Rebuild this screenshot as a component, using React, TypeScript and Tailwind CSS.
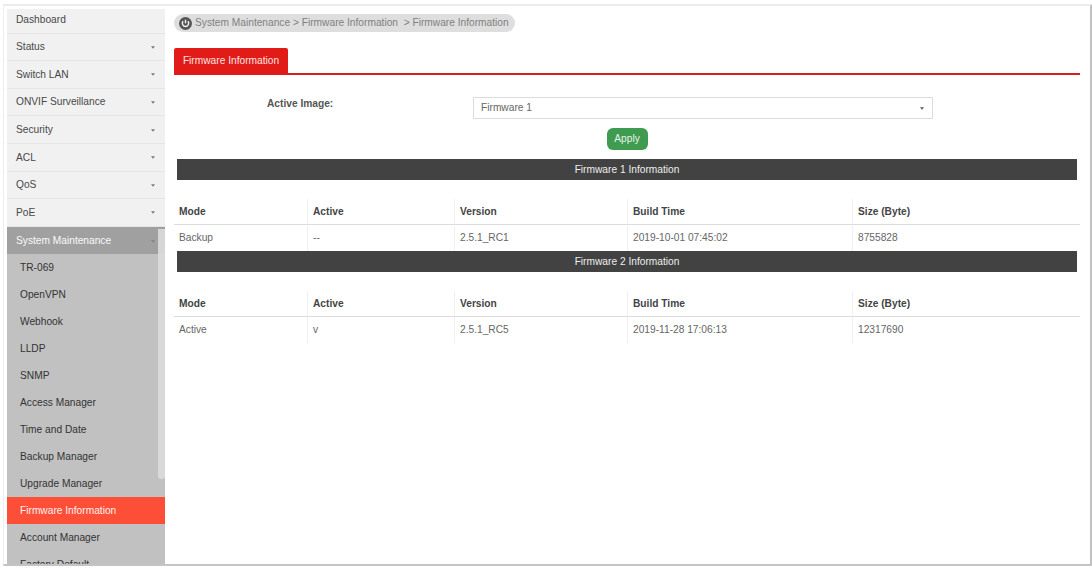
import React from "react";

const menu = ["Dashboard", "Status", "Switch LAN", "ONVIF Surveillance", "Security", "ACL", "QoS", "PoE"];

const submenu = [
  "TR-069",
  "OpenVPN",
  "Webhook",
  "LLDP",
  "SNMP",
  "Access Manager",
  "Time and Date",
  "Backup Manager",
  "Upgrade Manager",
  "Firmware Information",
  "Account Manager",
  "Factory Default",
];

const columns = ["Mode", "Active", "Version", "Build Time", "Size (Byte)"];

function Caret({ className = "" }: { className?: string }) {
  return (
    <svg className={className} width="4" height="3" viewBox="0 0 5 3" fill="currentColor">
      <path d="M0 0h5L2.5 3z" />
    </svg>
  );
}

function Sidebar() {
  return (
    <nav className="relative h-[555px] w-[158px] shrink-0 overflow-hidden bg-[#f1f1f1]">
      <ul className="-mt-[3px]">
        {menu.map((item, i) => (
          <li
            key={item}
            className="flex h-[27.6px] items-center border-b border-[#e5e5e5] pl-[9px] pr-[10px] pt-px text-[#484848]"
          >
            <span className="grow">{item}</span>
            {i > 0 && <Caret className="text-[#777]" />}
          </li>
        ))}
      </ul>
      <div className="flex h-[27px] items-center bg-[#a0a0a0] pl-[9px] pr-[10px] pt-[2px] text-[#fafafa]">
        <span className="grow">System Maintenance</span>
        <Caret className="text-[#808080]" />
      </div>
      <ul className="bg-[#c1c1c1]">
        {submenu.map((item) => (
          <li
            key={item}
            className={
              item === "Firmware Information"
                ? "flex h-[27px] items-center bg-[#fd4f38] pl-[13px] pt-[2px] text-[#fff0ed]"
                : "flex h-[27px] items-center pl-[13px] pt-px text-[#333]"
            }
          >
            {item}
          </li>
        ))}
      </ul>
      <div className="absolute right-0 top-[220px] h-[250px] w-[7px] rounded-b-[3px] bg-[#dcdcdc]/90" />
    </nav>
  );
}

function FirmwareTable({ title, values }: { title: string; values: string[] }) {
  return (
    <section className="h-[92px]">
      <h2 className="mx-[3px] flex h-[21px] items-center justify-center bg-[#424242] pt-[2px] text-[#eee]">{title}</h2>
      <div className="mt-[19px] grid grid-cols-[133px_147px_173px_225px_1fr]">
        {columns.map((c, i) => (
          <div
            key={c}
            className={
              "flex h-[26px] items-center border-b border-[#dcdcdc] pl-[5px] pt-[2px] font-bold text-[#444] " +
              (i > 0 ? "border-l border-l-[#f0f0f0]" : "")
            }
          >
            {c}
          </div>
        ))}
        {values.map((v, i) => (
          <div
            key={columns[i]}
            className={
              "flex h-[26px] items-center pl-[5px] pt-px text-[#666] " + (i > 0 ? "border-l border-[#f0f0f0]" : "")
            }
          >
            {v}
          </div>
        ))}
      </div>
    </section>
  );
}

export default function App() {
  return (
    <div className="h-[570px] w-[1092px] overflow-hidden bg-white pl-[3px] pt-[4px] font-['Liberation_Sans',Arial,sans-serif] text-[10.2px] leading-none">
      <div className="flex h-[562px] w-[1089px] overflow-hidden border-b-2 border-l border-r-2 border-t-2 border-b-[#c4c4c4] border-l-[#eee] border-r-[#c0c0c0] border-t-[#ececec] pl-[3px] pt-[3px]">
        <Sidebar />
        <main className="grow pl-[9px] pr-[10px] pt-[5px]">
          <div className="flex h-[18px] w-[341px] items-center rounded-full bg-[#dedede] pl-[5px]">
            <svg width="13" height="13" viewBox="0 0 12 12">
              <circle cx="6" cy="6" r="6" fill="#555" />
              <path d="M3.6 3.8C2.4 6 3.6 8.8 6 8.8S9.6 6 8.4 3.8M6 2.6v3.2" fill="none" stroke="#f2f2f2" strokeWidth="1.3" />
            </svg>
            <span className="whitespace-pre pl-[3px] pt-px text-[#808080]">
              {"System Maintenance > Firmware Information  > Firmware Information"}
            </span>
          </div>
          <div className="mt-[16px] flex h-[27px] border-b-2 border-[#d81f26]">
            <div className="flex h-[27px] w-[114px] items-center justify-center rounded-t-[2px] bg-[#e11b18] text-[#ffe3e0]">
              Firmware Information
            </div>
          </div>
          <div className="mt-[22px] flex h-[22px]">
            <label className="w-[299px] pl-[93px] pt-[2px] font-bold text-[#555]">Active Image:</label>
            <div className="flex w-[460px] items-center justify-between border border-[#dcdcdc] pl-[7px] pr-[8px] text-[#666]">
              <span>Firmware 1</span>
              <Caret className="text-[#555]" />
            </div>
          </div>
          <div className="flex h-[40px] justify-center pt-[9px]">
            <button className="h-[22px] w-[41px] rounded-[6px] bg-[#3f9b50] leading-none text-[#e8f5e9]">
              Apply
            </button>
          </div>
          <FirmwareTable title="Firmware 1 Information" values={["Backup", "--", "2.5.1_RC1", "2019-10-01 07:45:02", "8755828"]} />
          <FirmwareTable title="Firmware 2 Information" values={["Active", "v", "2.5.1_RC5", "2019-11-28 17:06:13", "12317690"]} />
        </main>
      </div>
    </div>
  );
}
